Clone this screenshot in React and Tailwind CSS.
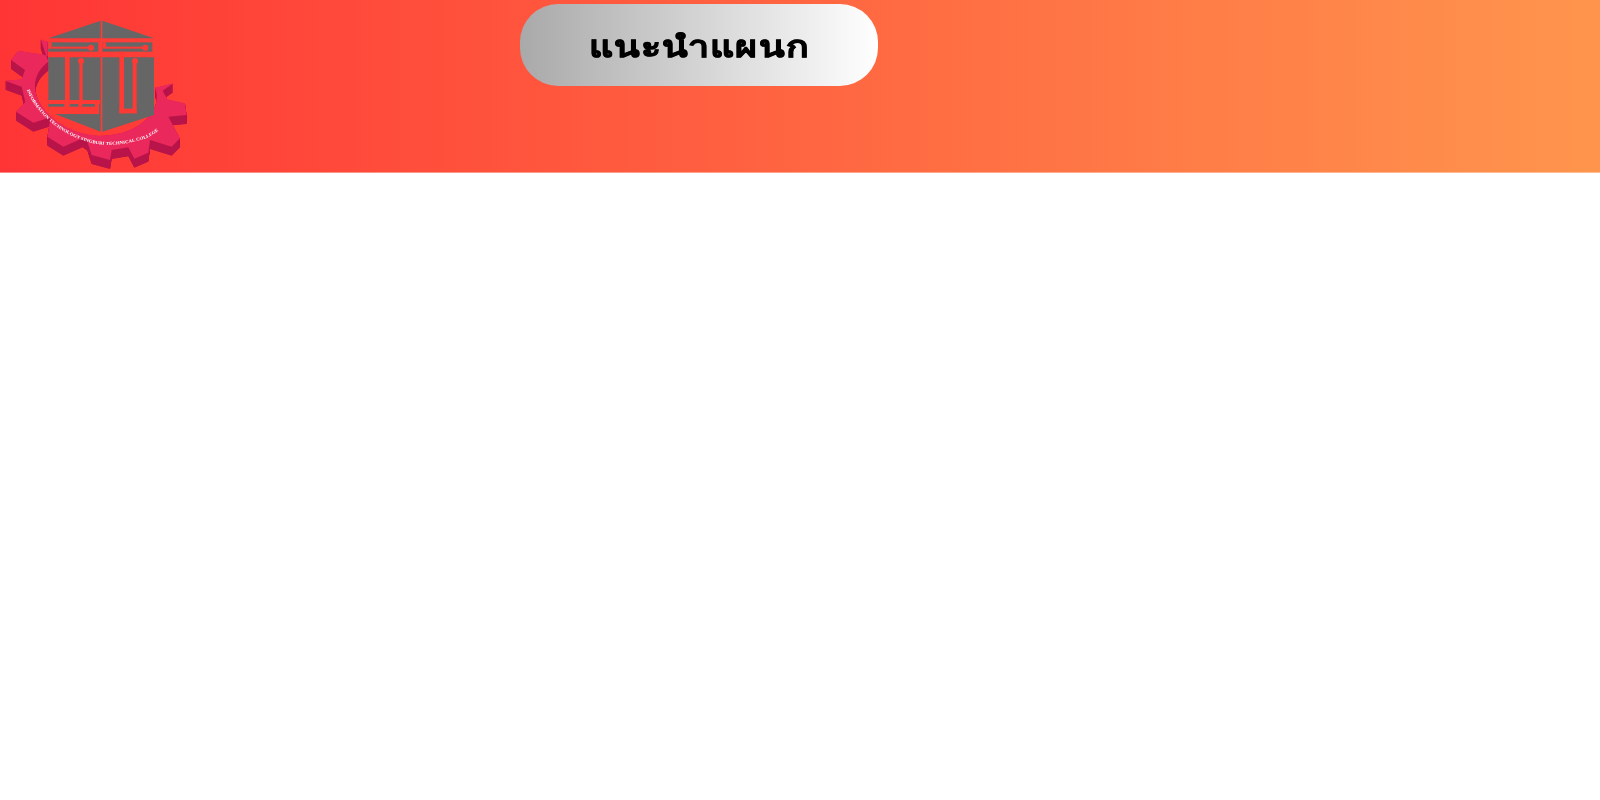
const GEAR =
  "M122,118 L143,125 L143,168 L126,163 L55,152 L33,180 L75,210 L65,238 L15,242 L65,260 L76,306 L48,335 L100,368 L152,352 L142,410 L190,440 L248,415 L262,425 L275,465 L330,480 L335,450 L385,442 L403,476 L445,458 L450,420 L515,440 L540,415 L505,350 L560,345 L555,310 L502,298 L488,272 L520,250 L465,263 C490,320 430,405 300,407 C210,407 110,340 105,262 C103,225 125,200 145,185 Z";

const SHIFTS = Array.from({ length: 27 }, (_, i) => i + 1);

function Logo() {
  const red = "#ff3a35";
  return (
    <svg viewBox="0 0 600 516" className="block w-[200px] h-[172px] shrink-0 blur-[0.35px]">
      {SHIFTS.map((s) => (
        <path key={s} d={GEAR} fill="#b8144a" transform={`translate(0 ${s})`} />
      ))}
      <path d={GEAR} fill="#ea285c" />
      <g fill="#666666">
        <polygon points="302,62 302,115 145,115" />
        <polygon points="307,62 462,115 307,115" />
        <rect x="145" y="127" width="150" height="28" />
        <rect x="307" y="127" width="150" height="28" />
        <polygon points="145,172 302,172 302,395 165,342 145,342" />
        <polygon points="307,172 462,172 462,345 307,395" />
      </g>
      <g fill={red}>
        <rect x="145" y="127" width="10" height="19" />
        <rect x="155" y="140" width="118" height="6" />
        <circle cx="273" cy="143" r="9" />
        <rect x="307" y="127" width="11" height="19" />
        <rect x="318" y="140" width="118" height="6" />
        <circle cx="436" cy="143" r="9" />
        <rect x="195" y="155" width="14" height="170" />
        <rect x="238" y="183" width="10" height="122" />
        <circle cx="243" cy="183" r="9" />
        <rect x="145" y="300" width="155" height="12" />
        <rect x="193" y="312" width="12" height="8" />
        <rect x="235" y="312" width="12" height="8" />
        <rect x="285" y="312" width="12" height="30" />
        <rect x="145" y="320" width="150" height="22" />
        <rect x="358" y="155" width="14" height="185" />
        <rect x="398" y="183" width="12" height="157" />
        <circle cx="405" cy="183" r="9" />
        <rect x="358" y="326" width="52" height="14" />
      </g>
      <path id="logo-arc" d="M80,270 C120,368 240,442 340,434 C400,430 450,415 474,392" fill="none" />
      <text fill="#ffffff" fontFamily="'Liberation Serif', serif" fontSize="13" fontWeight="700">
        <textPath href="#logo-arc" textLength="470" lengthAdjust="spacingAndGlyphs">
          INFORMATION TECHNOLOGY SINGBURI  TECHNICAL COLLEGE
        </textPath>
      </text>
    </svg>
  );
}

export default function App() {
  return (
    <div className="min-h-[800px] bg-white">
      <header className="flex items-start h-[173px] border-b border-white/40 bg-[linear-gradient(to_right,#ff3535,#ff954d)] overflow-hidden">
        <Logo />
        <div className="ml-[320px] mt-[3.5px] flex items-center justify-center w-[358px] h-[82px] rounded-[38px] bg-[linear-gradient(to_right,#a9a9a9,#ffffff)]">
          <h1 className="pt-[2px] text-[30px] leading-none font-black tracking-[0.8px] scale-x-[1.25] text-black [-webkit-text-stroke:0.7px_black] font-['Noto_Sans',sans-serif]">
            แนะนำแผนก
          </h1>
        </div>
      </header>
    </div>
  );
}
